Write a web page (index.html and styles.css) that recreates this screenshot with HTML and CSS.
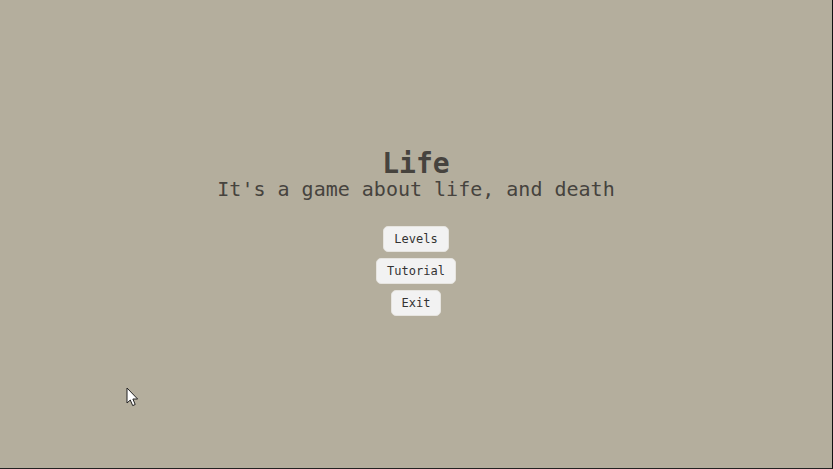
FILE: index.html
```html
<!DOCTYPE html>
<html lang="en">
<head>
    <meta charset="UTF-8">
    <meta name="viewport" content="width=device-width, initial-scale=1.0">
    <title>Life</title>
    <link rel="stylesheet" href="styles.css">
</head>
<body>
    <main class="menu">
        <h1>Life</h1>
        <p class="tagline">It's a game about life, and death</p>
        <nav class="buttons">
            <button type="button">Levels</button>
            <button type="button">Tutorial</button>
            <button type="button">Exit</button>
        </nav>
    </main>

    <svg class="cursor" width="13" height="20" viewBox="0 0 13 20" aria-hidden="true">
        <path d="M1 1 V16 L4.3 13 L6.7 18.6 L9.2 17.5 L6.9 12 H11.6 Z" fill="#fff" stroke="#222" stroke-width="1"/>
    </svg>
</body>
</html>
```

FILE: styles.css
```css
* {
    box-sizing: border-box;
}

body {
    margin: 0;
    min-height: 100vh;
    display: flex;
    align-items: center;
    justify-content: center;
    background-color: #b4ae9d;
    border-right: 1px solid #111;
    border-bottom: 1px solid #222;
    color: #46433e;
    font-family: "DejaVu Sans Mono", monospace;
}

.menu {
    display: flex;
    flex-direction: column;
    align-items: center;
    padding-bottom: 2px;
    text-align: center;
}

h1 {
    margin: 0;
    font-size: 28px;
    line-height: 26px;
}

.tagline {
    margin: 0 0 25px;
    font-size: 20px;
    line-height: 24px;
}

.buttons {
    display: flex;
    flex-direction: column;
    align-items: center;
    gap: 6px;
}

button {
    height: 26px;
    padding: 0 10px;
    background-color: #f2f2f2;
    color: #333;
    border: 1px solid #e6e4df;
    border-radius: 5px;
    font-family: inherit;
    font-size: 12px;
    cursor: pointer;
}

button:hover {
    background-color: #fff;
}

/* Pointer drawn over the menu */
.cursor {
    position: absolute;
    left: 126px;
    top: 387px;
    pointer-events: none;
}
```
